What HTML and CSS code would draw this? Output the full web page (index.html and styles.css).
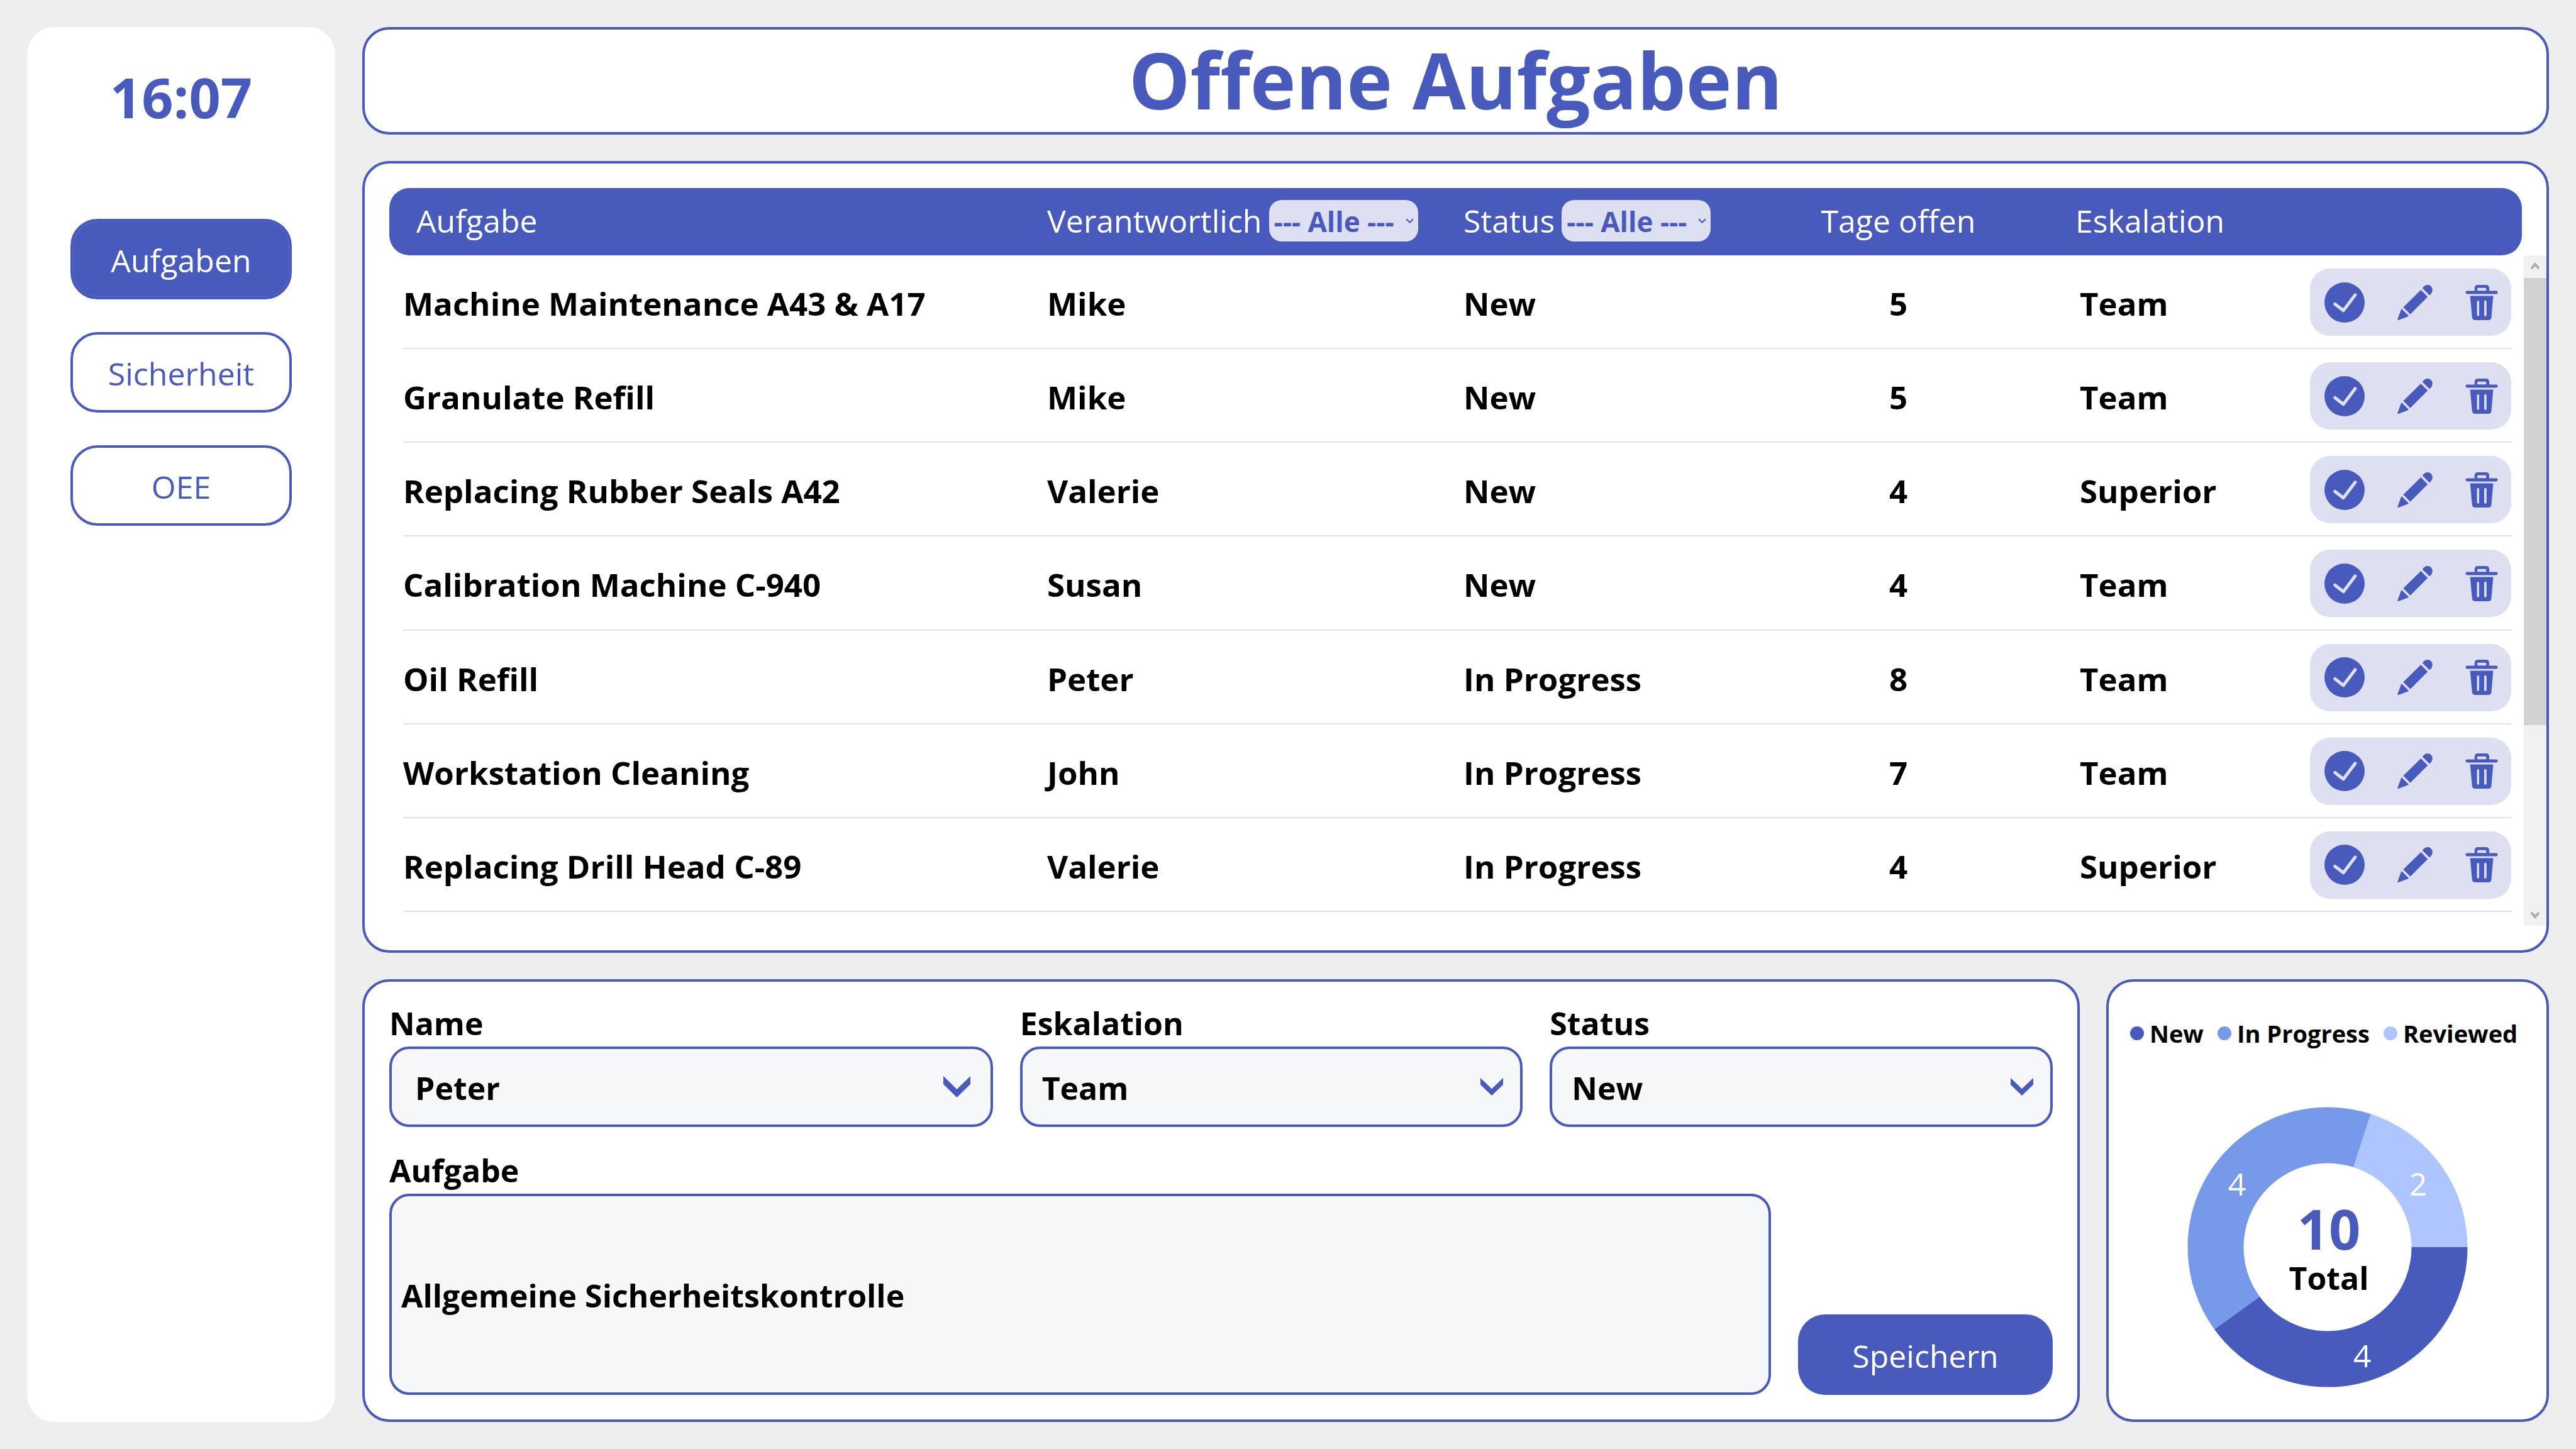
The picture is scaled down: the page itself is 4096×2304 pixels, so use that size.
FILE: index.html
```html
<!DOCTYPE html>
<html lang="de">
<head>
<meta charset="utf-8">
<title>Offene Aufgaben</title>
<link rel="stylesheet" href="styles.css">
</head>
<body>
<svg class="sprite" aria-hidden="true">
  <symbol id="icon-check" viewBox="0 0 240 240">
    <circle cx="120" cy="120" r="120" fill="currentColor"/>
    <path class="check-mark" d="M63 129 L113 168 L183 75"/>
  </symbol>
  <symbol id="icon-pencil" viewBox="0 0 208 210">
    <path fill="currentColor" d="M150 22 Q148 19 151 16 C158 6 168 0 178 0 C195 0 208 13 208 30 C208 42 202 52 194 59 Q191 61 188 59 Z"/>
    <path fill="currentColor" d="M139 30 L180 71 L76 175 L34 133 Z"/>
    <path fill="currentColor" d="M22 145 Q23 141 27 145 L64 182 Q67 186 63 188 L5 210 Q-1 211 0 205 Z"/>
  </symbol>
  <symbol id="icon-trash" viewBox="0 0 192 210">
    <path fill="currentColor" fill-rule="evenodd" d="M54 40 V20 Q54 0 74 0 H121 Q141 0 141 20 V40 Z M70 36 H123 V22 Q123 18 119 18 H74 Q70 18 70 22 Z"/>
    <rect fill="currentColor" x="0" y="36" width="192" height="18" rx="9"/>
    <path fill="currentColor" fill-rule="evenodd" d="M27 66 H165 L154 194 Q152 210 136 210 H57 Q41 210 39 194 Z M68 100 V180 a6.500 6.500 0 0 0 13 0 V100 a6.500 6.500 0 0 0 -13 0 Z M111 100 V180 a7 7 0 0 0 14 0 V100 a7 7 0 0 0 -14 0 Z"/>
  </symbol>
  <symbol id="icon-chevron" viewBox="0 0 43 34" preserveAspectRatio="none">
    <path fill="currentColor" d="M0 0 L21.500 21 L43 0 V13 L21.500 34 L0 13 Z"/>
  </symbol>
</svg>
<div class="app">
  <aside class="sidebar">
    <time class="clock" datetime="16:07">16:07</time>
    <nav class="nav">
      <button class="nav-button nav-button-active" type="button">Aufgaben</button>
      <button class="nav-button" type="button">Sicherheit</button>
      <button class="nav-button" type="button">OEE</button>
    </nav>
  </aside>
  <main class="main">
    <header class="card title-card"><h1 class="title">Offene Aufgaben</h1></header>

    <section class="card list-card">
      <table class="tasks">
        <thead class="tasks-head">
          <tr class="tasks-row head-row">
            <th>Aufgabe</th>
            <th><label class="filter">Verantwortlich
              <span class="picker filter-picker"><select class="filter-select"><option>--- Alle ---</option></select><svg class="filter-chevron" aria-hidden="true"><use href="#icon-chevron"/></svg></span></label></th>
            <th><label class="filter">Status
              <span class="picker filter-picker"><select class="filter-select"><option>--- Alle ---</option></select><svg class="filter-chevron" aria-hidden="true"><use href="#icon-chevron"/></svg></span></label></th>
            <th class="days">Tage offen</th>
            <th class="level-head">Eskalation</th>
            <th></th>
          </tr>
        </thead>
        <tbody class="tasks-body">
          <tr class="tasks-row">
            <td>Machine Maintenance A43 &amp; A17</td><td>Mike</td><td>New</td><td class="days">5</td><td class="level">Team</td>
            <td class="actions"><button class="icon-button" type="button" aria-label="Erledigt"><svg class="icon-check"><use href="#icon-check"/></svg></button><button class="icon-button" type="button" aria-label="Bearbeiten"><svg class="icon-pencil"><use href="#icon-pencil"/></svg></button><button class="icon-button" type="button" aria-label="Löschen"><svg class="icon-trash"><use href="#icon-trash"/></svg></button></td>
          </tr>
          <tr class="tasks-row">
            <td>Granulate Refill</td><td>Mike</td><td>New</td><td class="days">5</td><td class="level">Team</td>
            <td class="actions"><button class="icon-button" type="button" aria-label="Erledigt"><svg class="icon-check"><use href="#icon-check"/></svg></button><button class="icon-button" type="button" aria-label="Bearbeiten"><svg class="icon-pencil"><use href="#icon-pencil"/></svg></button><button class="icon-button" type="button" aria-label="Löschen"><svg class="icon-trash"><use href="#icon-trash"/></svg></button></td>
          </tr>
          <tr class="tasks-row">
            <td>Replacing Rubber Seals A42</td><td>Valerie</td><td>New</td><td class="days">4</td><td class="level">Superior</td>
            <td class="actions"><button class="icon-button" type="button" aria-label="Erledigt"><svg class="icon-check"><use href="#icon-check"/></svg></button><button class="icon-button" type="button" aria-label="Bearbeiten"><svg class="icon-pencil"><use href="#icon-pencil"/></svg></button><button class="icon-button" type="button" aria-label="Löschen"><svg class="icon-trash"><use href="#icon-trash"/></svg></button></td>
          </tr>
          <tr class="tasks-row">
            <td>Calibration Machine C-940</td><td>Susan</td><td>New</td><td class="days">4</td><td class="level">Team</td>
            <td class="actions"><button class="icon-button" type="button" aria-label="Erledigt"><svg class="icon-check"><use href="#icon-check"/></svg></button><button class="icon-button" type="button" aria-label="Bearbeiten"><svg class="icon-pencil"><use href="#icon-pencil"/></svg></button><button class="icon-button" type="button" aria-label="Löschen"><svg class="icon-trash"><use href="#icon-trash"/></svg></button></td>
          </tr>
          <tr class="tasks-row">
            <td>Oil Refill</td><td>Peter</td><td>In Progress</td><td class="days">8</td><td class="level">Team</td>
            <td class="actions"><button class="icon-button" type="button" aria-label="Erledigt"><svg class="icon-check"><use href="#icon-check"/></svg></button><button class="icon-button" type="button" aria-label="Bearbeiten"><svg class="icon-pencil"><use href="#icon-pencil"/></svg></button><button class="icon-button" type="button" aria-label="Löschen"><svg class="icon-trash"><use href="#icon-trash"/></svg></button></td>
          </tr>
          <tr class="tasks-row">
            <td>Workstation Cleaning</td><td>John</td><td>In Progress</td><td class="days">7</td><td class="level">Team</td>
            <td class="actions"><button class="icon-button" type="button" aria-label="Erledigt"><svg class="icon-check"><use href="#icon-check"/></svg></button><button class="icon-button" type="button" aria-label="Bearbeiten"><svg class="icon-pencil"><use href="#icon-pencil"/></svg></button><button class="icon-button" type="button" aria-label="Löschen"><svg class="icon-trash"><use href="#icon-trash"/></svg></button></td>
          </tr>
          <tr class="tasks-row">
            <td>Replacing Drill Head C-89</td><td>Valerie</td><td>In Progress</td><td class="days">4</td><td class="level">Superior</td>
            <td class="actions"><button class="icon-button" type="button" aria-label="Erledigt"><svg class="icon-check"><use href="#icon-check"/></svg></button><button class="icon-button" type="button" aria-label="Bearbeiten"><svg class="icon-pencil"><use href="#icon-pencil"/></svg></button><button class="icon-button" type="button" aria-label="Löschen"><svg class="icon-trash"><use href="#icon-trash"/></svg></button></td>
          </tr>
        </tbody>
      </table>
      <div class="scrollbar" aria-hidden="true">
        <svg class="scroll-arrow" viewBox="0 0 36 36"><path d="M12 21 L18 14 L24 21"/></svg>
        <div class="scroll-track"><div class="scroll-thumb"></div></div>
        <svg class="scroll-arrow" viewBox="0 0 36 36"><path d="M12 15 L18 22 L24 15"/></svg>
      </div>
    </section>

    <div class="bottom">
      <form class="card form-card">
        <div class="form-row">
          <div class="field field-wide">
            <label class="field-label" for="name">Name</label>
            <span class="picker"><select class="box field-select" id="name"><option>Peter</option></select><svg class="field-chevron" aria-hidden="true"><use href="#icon-chevron"/></svg></span>
          </div>
          <div class="field">
            <label class="field-label" for="level">Eskalation</label>
            <span class="picker"><select class="box field-select" id="level"><option>Team</option></select><svg class="field-chevron" aria-hidden="true"><use href="#icon-chevron"/></svg></span>
          </div>
          <div class="field">
            <label class="field-label" for="status">Status</label>
            <span class="picker"><select class="box field-select" id="status"><option>New</option></select><svg class="field-chevron" aria-hidden="true"><use href="#icon-chevron"/></svg></span>
          </div>
        </div>
        <div class="form-row form-row-fill">
          <div class="field">
            <label class="field-label" for="task">Aufgabe</label>
            <input class="box task-input" id="task" type="text" value="Allgemeine Sicherheitskontrolle">
          </div>
          <button class="save-button" type="button">Speichern</button>
        </div>
      </form>

      <section class="card chart-card">
        <ul class="legend">
          <li class="legend-item"><span class="dot dot-new"></span>New</li>
          <li class="legend-item"><span class="dot dot-progress"></span>In Progress</li>
          <li class="legend-item"><span class="dot dot-reviewed"></span>Reviewed</li>
        </ul>
        <!-- ring of radius 178, stroke 89; path length normalised to the 10 tasks -->
        <svg class="donut" viewBox="0 0 446 446" role="img" aria-label="10 Total">
          <circle class="ring ring-new" cx="223" cy="223" r="178" pathLength="10" stroke-dasharray="4 6"/>
          <circle class="ring ring-progress" cx="223" cy="223" r="178" pathLength="10" stroke-dasharray="4 6" stroke-dashoffset="-4"/>
          <circle class="ring ring-reviewed" cx="223" cy="223" r="178" pathLength="10" stroke-dasharray="2 8" stroke-dashoffset="-8"/>
          <text class="slice-text" x="79" y="141">4</text>
          <text class="slice-text" x="367" y="141">2</text>
          <text class="slice-text" x="278" y="414">4</text>
          <text class="total-number" x="225" y="227">10</text>
          <text class="total-text" x="225" y="291">Total</text>
        </svg>
      </section>
    </div>
  </main>
</div>
</body>
</html>
```
FILE: styles.css
```css
:root {
  --accent: #485abc;
  --accent-mid: #7799e9;
  --accent-light: #afc5ff;
  --tint: #dedff1;
  --field: #f5f7f9;
}

* { box-sizing: border-box; }

body {
  margin: 0;
  background: #eee;
  color: #000;
  font: 400 50px/60px "Open Sans", "Noto Sans", sans-serif;
}

button, select, input { font: inherit; margin: 0; }

.sprite { display: none; }

.app {
  display: grid;
  grid-template-columns: 490px 1fr;
  gap: 43px;
  min-height: 100vh;
  padding: 43px;
}

/* Sidebar */
.sidebar {
  display: flex;
  flex-direction: column;
  gap: 134px;
  padding: 51px 69px;
  border-radius: 43px;
  background: #fff;
}

.clock {
  color: var(--accent);
  font-size: 88px;
  font-weight: 700;
  line-height: 120px;
  text-align: center;
}

.nav {
  display: flex;
  flex-direction: column;
  gap: 52px;
}

.nav-button {
  height: 128px;
  padding: 4px 0 0;
  border: 4px solid var(--accent);
  border-radius: 43px;
  background: #fff;
  color: var(--accent);
}

.nav-button-active {
  background: var(--accent);
  box-shadow: inset 0 0 0 1px #5c6cc4;
  color: #fff;
}

/* Cards */
.main {
  display: grid;
  grid-template-rows: 171px 1fr 704px;
  gap: 42px;
}

.card {
  border: 4px solid var(--accent);
  border-radius: 43px;
  background: #fff;
}

.title-card {
  display: flex;
  align-items: center;
  justify-content: center;
  padding-bottom: 4px;
}

.title {
  margin: 0;
  color: var(--accent);
  font-size: 123px;
  font-weight: 700;
  line-height: 156px;
  font-variant-ligatures: none;
}

/* Task list */
.list-card {
  display: grid;
  grid-template-columns: 1fr 36px;
  gap: 3px;
  padding: 39px 0 39px 39px;
}

.tasks {
  display: flex;
  flex-direction: column;
}

.tasks-head { display: block; }

.tasks-row {
  display: grid;
  grid-template-columns: 1fr 662px 410px 560px 376px 320px;
  align-items: center;
}

.tasks-row th { padding: 0; }

.tasks-row td { padding: 3px 0 0; }

.head-row {
  height: 107px;
  padding: 0 17px 4px 43px;
  border-radius: 32px;
  background: var(--accent);
  color: #fff;
}

.head-row th {
  font-weight: 400;
  text-align: left;
}

.head-row .level-head { padding-left: 3px; }

.tasks-body {
  display: grid;
  grid-auto-rows: 1fr;
  flex: 1;
  padding: 0 17px 22px 22px;
  font-size: 51px;
  font-weight: 700;
}

.tasks-body .tasks-row {
  padding-top: 2px;
  border-bottom: 2px solid var(--tint);
}

.tasks-row .days {
  padding-left: 3px;
  text-align: center;
}

.tasks-row .level { padding-left: 10px; }

.filter {
  display: flex;
  align-items: center;
  gap: 11px;
}

.picker {
  display: grid;
  align-items: center;
}

.picker > * { grid-area: 1 / 1; }

.filter-select {
  width: 237px;
  height: 66px;
  padding: 2px 8px 0;
  appearance: none;
  border: 0;
  border-radius: 20px;
  background: var(--tint);
  color: var(--accent);
  font-size: 44px;
  font-weight: 700;
}

.filter-chevron {
  justify-self: end;
  width: 11px;
  height: 8px;
  margin-right: 8px;
  color: var(--accent);
  pointer-events: none;
}

.tasks-row .actions {
  display: flex;
  align-items: center;
  justify-content: space-between;
  height: 107px;
  padding: 0 21px 0 23px;
  border-radius: 32px;
  background: var(--tint);
}

.icon-button {
  display: flex;
  padding: 0;
  border: 0;
  background: none;
  color: var(--accent);
}

.icon-check { width: 64px; height: 64px; }
.icon-pencil { width: 56px; height: 56px; }
.icon-trash { width: 52px; height: 56px; }

.check-mark {
  fill: none;
  stroke: var(--tint);
  stroke-width: 19;
  stroke-linecap: round;
  stroke-linejoin: round;
}

.scrollbar {
  display: flex;
  flex-direction: column;
  margin-top: 107px;
  background: #f1f1f1;
}

.scroll-arrow {
  width: 36px;
  height: 36px;
  fill: none;
  stroke: #ababab;
  stroke-width: 4;
}

.scroll-track { flex: 1; }

.scroll-thumb {
  height: 71.5%;
  background: #d2d2d2;
}

/* Form */
.bottom {
  display: grid;
  grid-template-columns: 1fr 704px;
  gap: 42px;
}

.form-card {
  display: flex;
  flex-direction: column;
  gap: 39px;
  padding: 36px 39px 39px;
}

.form-row {
  display: flex;
  gap: 43px;
}

.form-row-fill {
  flex: 1;
  align-items: flex-end;
}

.field {
  display: flex;
  flex: 5;
  flex-direction: column;
  gap: 7px;
}

.field-wide { flex: 6; }

.form-row-fill .field { align-self: stretch; }

.field-label { font-weight: 700; }

.box {
  width: 100%;
  border: 4px solid var(--accent);
  border-radius: 32px;
  background: var(--field);
  color: #000;
  font-weight: 700;
  line-height: 72px;
}

.field-select {
  height: 128px;
  padding: 4px 31px 0;
  appearance: none;
}

.field-wide .field-select { padding: 4px 37px 0; }

.field-chevron {
  justify-self: end;
  width: 36px;
  height: 28px;
  margin-right: 31px;
  color: var(--accent);
  pointer-events: none;
}

.field-wide .field-chevron {
  width: 43px;
  height: 34px;
  margin-right: 36px;
}

.task-input {
  flex: 1;
  padding: 4px 15px 0;
}

.save-button {
  width: 405px;
  height: 128px;
  padding: 4px 0 0;
  border: 0;
  border-radius: 43px;
  background: var(--accent);
  color: #fff;
}

/* Chart */
.chart-card {
  display: flex;
  flex-direction: column;
  gap: 87px;
  padding: 52px 34px 0;
}

.legend {
  display: flex;
  gap: 22px;
  margin: 0;
  padding: 0;
  font-size: 38px;
  font-weight: 700;
  list-style: none;
  white-space: nowrap;
}

.legend-item {
  display: flex;
  align-items: center;
  gap: 9px;
}

.dot {
  width: 22px;
  height: 22px;
  border-radius: 50%;
}

.dot-new { background: var(--accent); }
.dot-progress { background: var(--accent-mid); }
.dot-reviewed { background: var(--accent-light); }

.donut {
  align-self: center;
  width: 446px;
  height: 446px;
  text-anchor: middle;
}

.ring { fill: none; stroke-width: 89; }
.ring-new { stroke: var(--accent); }
.ring-progress { stroke: var(--accent-mid); }
.ring-reviewed { stroke: var(--accent-light); }

.slice-text { fill: #fff; }

.total-number {
  fill: var(--accent);
  font-size: 88px;
  font-weight: 700;
}

.total-text { font-weight: 700; }
```
